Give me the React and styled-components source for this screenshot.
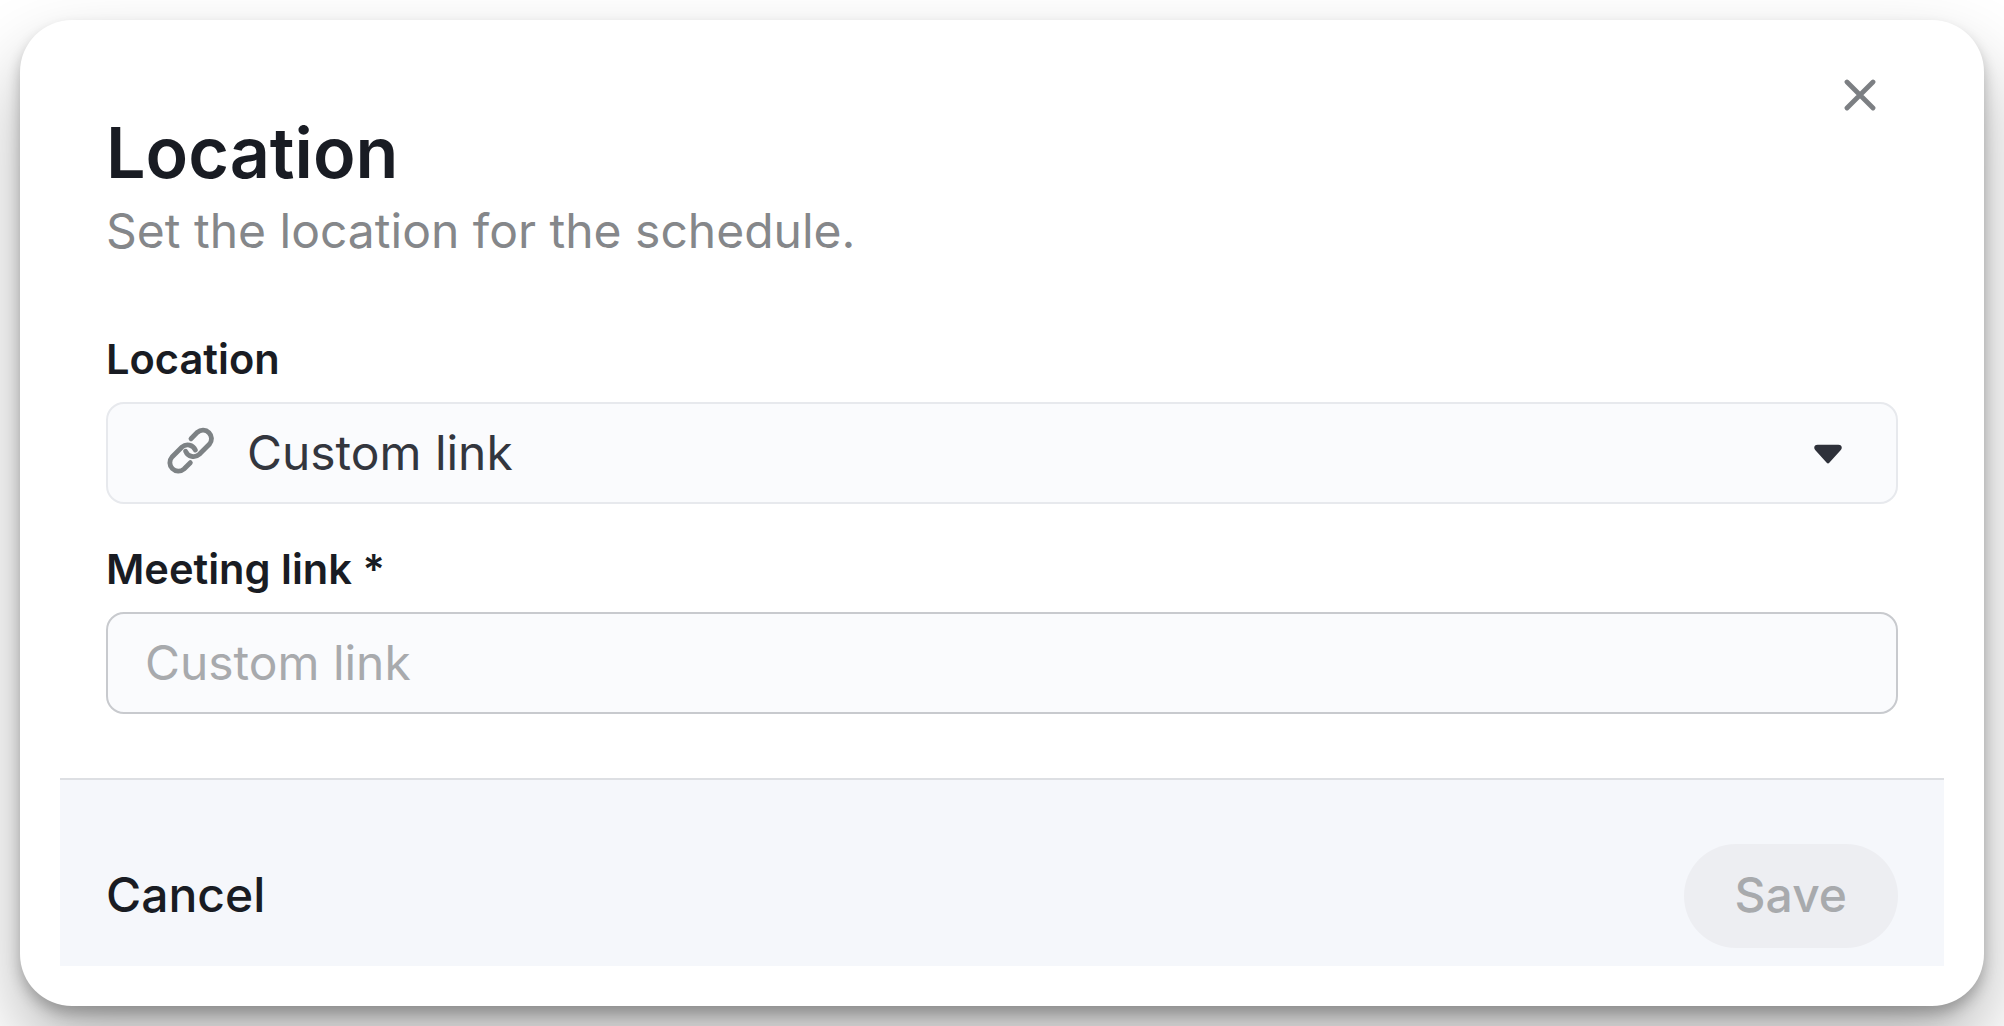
import { useState } from "react";
import styled, { createGlobalStyle } from "styled-components";

const LinkIcon = () => (
    <svg width="80" height="80" viewBox="0 0 240 240" fill="none" stroke="#7d8285" strokeWidth="14.5" strokeLinecap="round" strokeLinejoin="round">
        <path d="M123 77L142 58A25.5 25.5 0 0 1 178 94L148 124A25.5 25.5 0 0 1 107 115" />
        <path d="M121 149L102 168A25.5 25.5 0 0 1 66 132L96 102A25.5 25.5 0 0 1 136 111" />
    </svg>
);

const CloseIcon = () => (
    <svg width="32" height="32" viewBox="0 0 32 32" fill="none" stroke="#7c7f83" strokeWidth="4.8" strokeLinecap="round">
        <path d="M3 3L29 29M29 3L3 29" />
    </svg>
);

const ArrowIcon = () => (
    <svg width="28" height="24" viewBox="0 0 28 24" fill="#2e313a">
        <path d="M3.6 3.8H24.4C27.8 3.8 28.8 7 26.6 9.2L15.3 21.8C14.5 22.6 13.5 22.6 12.7 21.8L1.4 9.2C-0.8 7 0.2 3.8 3.6 3.8Z" />
    </svg>
);

const App = () => {
    const [link, setLink] = useState("");
    return (
        <Page>
            <GlobalStyle />
            <Dialog>
                <Header>
                    <div>
                        <Title>Location</Title>
                        <Subtitle>Set the location for the schedule.</Subtitle>
                    </div>
                    <CloseButton aria-label="Close"><CloseIcon /></CloseButton>
                </Header>
                <Form>
                    <Field>
                        <Label>Location</Label>
                        <SelectBox type="button">
                            <LinkIcon />
                            <SelectValue>Custom link</SelectValue>
                            <ArrowIcon />
                        </SelectBox>
                    </Field>
                    <Field>
                        <Label>Meeting link *</Label>
                        <Input type="text" value={link} onChange={(e) => setLink(e.target.value)} placeholder="Custom link" />
                    </Field>
                </Form>
                <Footer>
                    <Button>Cancel</Button>
                    <Button $filled disabled={!link}>Save</Button>
                </Footer>
            </Dialog>
        </Page>
    );
};

const GlobalStyle = createGlobalStyle`
    * {
        box-sizing: border-box;
    }
    body {
        margin: 0;
        background: #fff;
        overflow: hidden;
    }
    body, button, input {
        font-family: Inter, "Liberation Sans", sans-serif;
    }
`

const Page = styled.div`
    height: 1026px;
    padding: 20px;
    overflow: hidden;
`

const Dialog = styled.div`
    height: 986px;
    padding: 0 40px 40px;
    display: flex;
    flex-direction: column;
    background: #fff;
    border-radius: 52px;
    box-shadow: 0 40px 76px rgba(0, 0, 0, 0.3), 0 8px 14px rgba(0, 0, 0, 0.24);
`

const Header = styled.div`
    display: flex;
    justify-content: space-between;
    align-items: flex-start;
    padding: 89px 46px 0;
`

const Title = styled.h1`
    margin: 0;
    font-size: 70px;
    line-height: 88px;
    font-weight: 600;
    color: #191c23;
`

const Subtitle = styled.p`
    margin: 2px 0 0;
    font-size: 48px;
    line-height: 64px;
    color: #85878a;
`

const CloseButton = styled.button`
    display: flex;
    margin: -30px 22px 0 0;
    padding: 0;
    border: none;
    background: none;
`

const Form = styled.div`
    display: flex;
    flex-direction: column;
    gap: 40px;
    padding: 71px 46px 64px;
`

const Field = styled.div`
    display: flex;
    flex-direction: column;
    gap: 18px;
`

const Label = styled.label`
    font-size: 41.6px;
    line-height: 50px;
    font-weight: 600;
    color: #191c23;
`

const SelectBox = styled.button`
    display: flex;
    align-items: center;
    height: 102px;
    padding: 0 54px 0 42px;
    border: 2px solid #e7e9ed;
    border-radius: 18px;
    background: #fafbfd;
    color: #33363e;
`

const SelectValue = styled.span`
    flex: 1;
    padding-left: 17px;
    text-align: left;
    font-size: 47.9px;
    line-height: 64px;
`

const Input = styled.input`
    height: 102px;
    padding: 0 37px;
    border: 2px solid #c8cace;
    border-radius: 18px;
    outline: none;
    background: #fafbfd;
    color: #33363e;
    font-size: 47.9px;
    &::placeholder {
        color: #a8aaad;
    }
`

const Footer = styled.div`
    flex: 1;
    display: flex;
    justify-content: space-between;
    align-items: flex-start;
    padding: 64px 46px 0;
    border-top: 2px solid #dddfe3;
    background: #f5f7fb;
`

const Button = styled.button`
    height: 104px;
    padding: ${({ $filled }) => ($filled ? "0 51px 4px" : "0 0 4px")};
    border: none;
    border-radius: 52px;
    background: ${({ $filled }) => ($filled ? "#edeef2" : "none")};
    color: #191c23;
    font-size: 48px;
    font-weight: 500;
    &:disabled {
        color: #a8aaad;
    }
`

export default App;
